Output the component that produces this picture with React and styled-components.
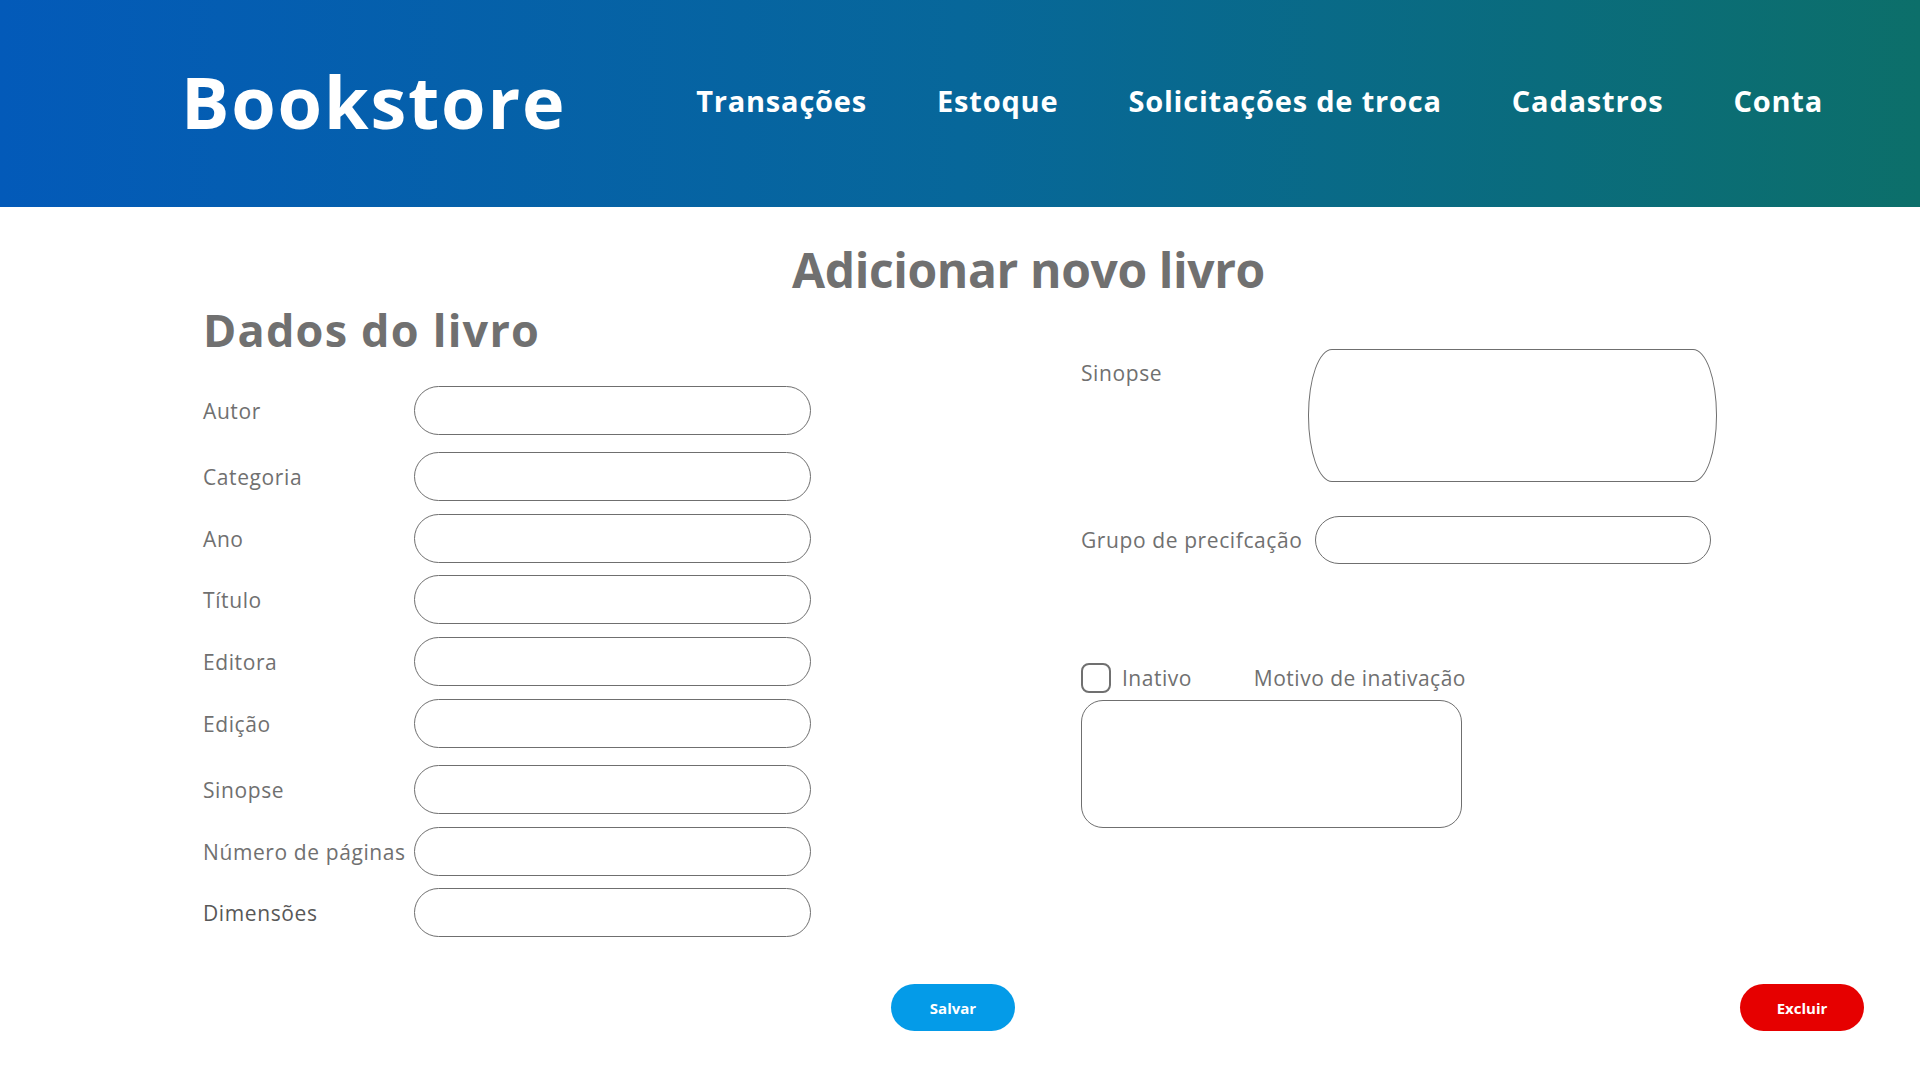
import React from 'react';
import styled, { createGlobalStyle } from 'styled-components';

const GlobalStyle = createGlobalStyle`
  * {
    box-sizing: border-box;
  }
  body {
    margin: 0;
    background: #ffffff;
    font-family: "Open Sans", "Noto Sans", "Liberation Sans", sans-serif;
  }
`;

const Header = styled.header`
  height: 207px;
  display: flex;
  align-items: center;
  justify-content: space-between;
  padding: 0 97px 6px 181px;
  background: linear-gradient(90deg, #035ab9 0%, #07679a 50%, #0c6f6a 100%);
`;

const Logo = styled.div`
  color: #ffffff;
  font-size: 72px;
  font-weight: 700;
  letter-spacing: 1.8px;
  line-height: 1;
`;

const Nav = styled.nav`
  display: flex;
  align-items: center;
  gap: 70px;
`;

const NavLink = styled.a`
  color: #ffffff;
  font-size: 29px;
  font-weight: 700;
  letter-spacing: 0.8px;
  text-decoration: none;
  cursor: pointer;
`;

const Main = styled.main`
  padding: 39px 56px 40px 203px;
`;

const PageTitle = styled.h1`
  margin: 0;
  padding-right: 10px;
  text-align: center;
  color: #707070;
  font-size: 48px;
  font-weight: 700;
  letter-spacing: -0.4px;
  line-height: 48px;
`;

const Columns = styled.div`
  display: grid;
  grid-template-columns: 878px 1fr;
`;

const LeftColumn = styled.section`
  display: flex;
  flex-direction: column;
`;

const SectionTitle = styled.h2`
  margin: 13px 0 0;
  color: #707070;
  font-size: 45px;
  font-weight: 700;
  letter-spacing: 1.2px;
  line-height: 45px;
`;

const FieldList = styled.div`
  margin-top: 34px;
  display: flex;
  flex-direction: column;
`;

const FieldRow = styled.label`
  display: grid;
  grid-template-columns: ${(p) => p.$labelWidth || 211}px auto;
  align-items: ${(p) => (p.$top ? 'start' : 'center')};
  margin-top: ${(p) => p.$mt || 0}px;
`;

const Label = styled.span`
  color: ${(p) => (p.$dark ? '#585858' : '#707070')};
  font-size: 21px;
  letter-spacing: 0.6px;
  line-height: 24px;
  padding-top: ${(p) => p.$pt || 0}px;
  white-space: nowrap;
`;

const TextInput = styled.input`
  width: ${(p) => p.$width || 397}px;
  height: ${(p) => p.$height || 49}px;
  border: 1px solid #6f6f6f;
  border-radius: 25px;
  background: #ffffff;
  padding: 0 20px;
  font-family: inherit;
  font-size: 18px;
  outline: none;
`;

const TextArea = styled.textarea`
  width: ${(p) => p.$width}px;
  height: ${(p) => p.$height}px;
  border: 1px solid #6f6f6f;
  border-radius: ${(p) => p.$radius};
  background: #ffffff;
  padding: 14px 20px;
  font-family: inherit;
  font-size: 18px;
  resize: none;
  outline: none;
`;

const RightColumn = styled.section`
  padding-top: 55px;
  display: flex;
  flex-direction: column;
`;

const InactiveBlock = styled.div`
  margin-top: 99px;
  display: flex;
  flex-direction: column;
  gap: 7px;
`;

const CheckRow = styled.div`
  display: flex;
  align-items: center;
  height: 30px;
`;

const Checkbox = styled.input.attrs({ type: 'checkbox' })`
  appearance: none;
  margin: 0;
  width: 30px;
  height: 30px;
  border: 2px solid #707070;
  border-radius: 8px;
  background: #ffffff;
  cursor: pointer;
`;

const CheckLabel = styled.span`
  color: #707070;
  font-size: 21px;
  letter-spacing: 0.5px;
  margin-left: ${(p) => p.$ml}px;
`;

const ButtonRow = styled.div`
  margin-top: 47px;
  display: flex;
  align-items: center;
  padding-left: 688px;
`;

const ActionButton = styled.button`
  width: 124px;
  height: 47px;
  border: none;
  border-radius: 24px;
  background: ${(p) => (p.$danger ? '#e60000' : '#049be8')};
  color: #ffffff;
  font-family: inherit;
  font-size: 15px;
  font-weight: 700;
  cursor: pointer;
  margin-left: ${(p) => (p.$pushRight ? 'auto' : '0')};
`;

const navItems = ['Transações', 'Estoque', 'Solicitações de troca', 'Cadastros', 'Conta'];

// spacing between rows is not even in the mockup, keep it as drawn
const bookFields = [
  { label: 'Autor', mt: 0 },
  { label: 'Categoria', mt: 17 },
  { label: 'Ano', mt: 13 },
  { label: 'Título', mt: 12 },
  { label: 'Editora', mt: 13 },
  { label: 'Edição', mt: 13 },
  { label: 'Sinopse', mt: 17 },
  { label: 'Número de páginas', mt: 13 },
  { label: 'Dimensões', mt: 12, dark: true },
];

const App = () => {
  return (
    <>
      <GlobalStyle />
      <Header>
        <Logo>Bookstore</Logo>
        <Nav>
          {navItems.map((item) => (
            <NavLink key={item}>{item}</NavLink>
          ))}
        </Nav>
      </Header>
      <Main>
        <PageTitle>Adicionar novo livro</PageTitle>
        <Columns>
          <LeftColumn>
            <SectionTitle>Dados do livro</SectionTitle>
            <FieldList>
              {bookFields.map((field) => (
                <FieldRow key={field.label} $mt={field.mt}>
                  <Label $dark={field.dark}>{field.label}</Label>
                  <TextInput type="text" />
                </FieldRow>
              ))}
            </FieldList>
          </LeftColumn>
          <RightColumn>
            <FieldRow $labelWidth={227} $top>
              <Label $pt={12}>Sinopse</Label>
              <TextArea $width={409} $height={133} $radius="24px / 66px" />
            </FieldRow>
            <FieldRow $labelWidth={234} $mt={34}>
              <Label>Grupo de precifcação</Label>
              <TextInput type="text" $width={396} $height={48} />
            </FieldRow>
            <InactiveBlock>
              <CheckRow>
                <Checkbox />
                <CheckLabel $ml={11}>Inativo</CheckLabel>
                <CheckLabel $ml={62}>Motivo de inativação</CheckLabel>
              </CheckRow>
              <TextArea $width={381} $height={128} $radius="22px" />
            </InactiveBlock>
          </RightColumn>
        </Columns>
        <ButtonRow>
          <ActionButton>Salvar</ActionButton>
          <ActionButton $danger $pushRight>Excluir</ActionButton>
        </ButtonRow>
      </Main>
    </>
  );
};

export default App;
